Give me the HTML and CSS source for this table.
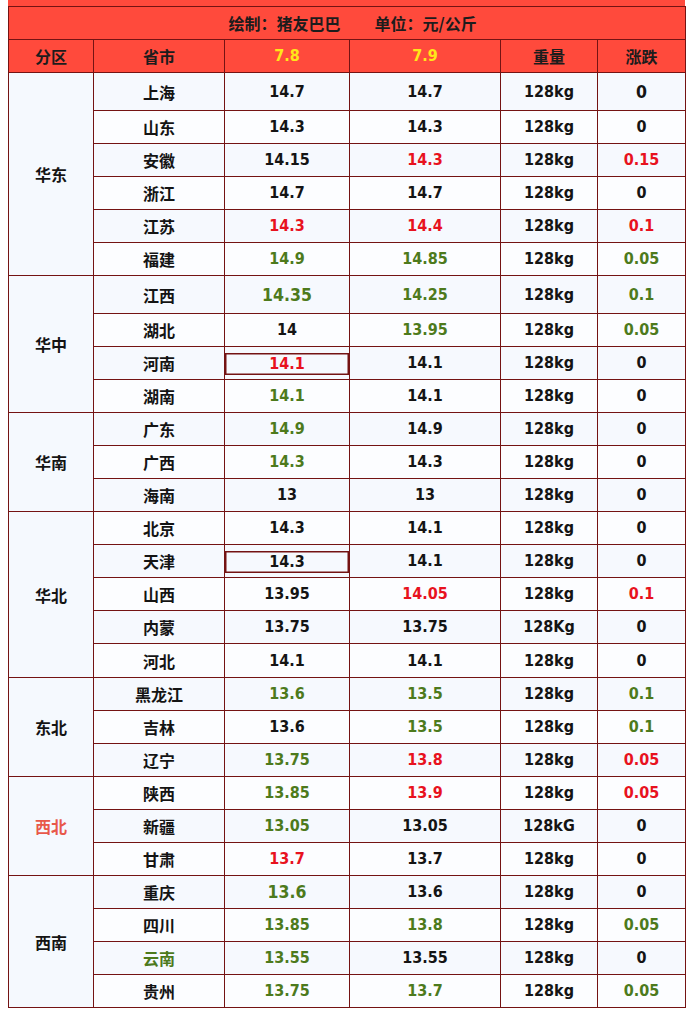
FILE: index.html
```html
<!DOCTYPE html>
<html lang="zh-CN">
<head>
<meta charset="utf-8">
<title>猪价表</title>
<link rel="stylesheet" href="styles.css">
</head>
<body>
<div class="sheet">
  <div class="strip"></div>
  <table class="price">
    <colgroup>
      <col class="c-zone"><col class="c-prov"><col class="c-d1"><col class="c-d2"><col class="c-wt"><col class="c-chg">
    </colgroup>
    <tr class="r-title">
      <td colspan="6" class="title"><span class="t1">绘制：猪友巴巴</span><span class="t2">单位：元/公斤</span></td>
    </tr>
    <tr class="r-head">
      <th class="cn">分区</th><th class="cn">省市</th><th class="num yellow">7.8</th><th class="num yellow">7.9</th><th class="cn">重量</th><th class="cn">涨跌</th>
    </tr>

    <tr class="r-tall odd">
      <td rowspan="6" class="zone">华东</td><td class="prov">上海</td><td class="num">14.7</td><td class="num">14.7</td><td class="num">128kg</td><td class="num big">0</td>
    </tr>
    <tr class="r even"><td class="prov">山东</td><td class="num">14.3</td><td class="num">14.3</td><td class="num">128kg</td><td class="num">0</td></tr>
    <tr class="r odd"><td class="prov">安徽</td><td class="num">14.15</td><td class="num red">14.3</td><td class="num">128kg</td><td class="num red">0.15</td></tr>
    <tr class="r even"><td class="prov">浙江</td><td class="num">14.7</td><td class="num">14.7</td><td class="num">128kg</td><td class="num">0</td></tr>
    <tr class="r odd"><td class="prov">江苏</td><td class="num red">14.3</td><td class="num red">14.4</td><td class="num">128kg</td><td class="num red">0.1</td></tr>
    <tr class="r even"><td class="prov">福建</td><td class="num green">14.9</td><td class="num green">14.85</td><td class="num">128kg</td><td class="num green">0.05</td></tr>

    <tr class="r-tall odd">
      <td rowspan="4" class="zone">华中</td><td class="prov">江西</td><td class="num green big">14.35</td><td class="num green">14.25</td><td class="num">128kg</td><td class="num green">0.1</td>
    </tr>
    <tr class="r even"><td class="prov">湖北</td><td class="num">14</td><td class="num green">13.95</td><td class="num">128kg</td><td class="num green">0.05</td></tr>
    <tr class="r odd"><td class="prov">河南</td><td class="num boxcell"><span class="boxed red">14.1</span></td><td class="num">14.1</td><td class="num">128kg</td><td class="num">0</td></tr>
    <tr class="r even"><td class="prov">湖南</td><td class="num green">14.1</td><td class="num">14.1</td><td class="num">128kg</td><td class="num">0</td></tr>

    <tr class="r odd">
      <td rowspan="3" class="zone">华南</td><td class="prov">广东</td><td class="num green">14.9</td><td class="num">14.9</td><td class="num">128kg</td><td class="num">0</td>
    </tr>
    <tr class="r even"><td class="prov">广西</td><td class="num green">14.3</td><td class="num">14.3</td><td class="num">128kg</td><td class="num">0</td></tr>
    <tr class="r odd"><td class="prov">海南</td><td class="num">13</td><td class="num">13</td><td class="num">128kg</td><td class="num">0</td></tr>

    <tr class="r even">
      <td rowspan="5" class="zone">华北</td><td class="prov">北京</td><td class="num">14.3</td><td class="num">14.1</td><td class="num">128kg</td><td class="num">0</td>
    </tr>
    <tr class="r odd"><td class="prov">天津</td><td class="num boxcell"><span class="boxed">14.3</span></td><td class="num">14.1</td><td class="num">128kg</td><td class="num">0</td></tr>
    <tr class="r even"><td class="prov">山西</td><td class="num">13.95</td><td class="num red">14.05</td><td class="num">128kg</td><td class="num red">0.1</td></tr>
    <tr class="r odd"><td class="prov">内蒙</td><td class="num">13.75</td><td class="num">13.75</td><td class="num">128Kg</td><td class="num">0</td></tr>
    <tr class="r-34 even"><td class="prov">河北</td><td class="num">14.1</td><td class="num">14.1</td><td class="num">128kg</td><td class="num">0</td></tr>

    <tr class="r odd">
      <td rowspan="3" class="zone">东北</td><td class="prov">黑龙江</td><td class="num green">13.6</td><td class="num green">13.5</td><td class="num">128kg</td><td class="num green">0.1</td>
    </tr>
    <tr class="r even"><td class="prov">吉林</td><td class="num">13.6</td><td class="num green">13.5</td><td class="num">128kg</td><td class="num green">0.1</td></tr>
    <tr class="r odd"><td class="prov">辽宁</td><td class="num green">13.75</td><td class="num red">13.8</td><td class="num">128kg</td><td class="num red">0.05</td></tr>

    <tr class="r even">
      <td rowspan="3" class="zone zone-red">西北</td><td class="prov">陕西</td><td class="num green">13.85</td><td class="num red">13.9</td><td class="num">128kg</td><td class="num red">0.05</td>
    </tr>
    <tr class="r odd"><td class="prov">新疆</td><td class="num green">13.05</td><td class="num">13.05</td><td class="num">128kG</td><td class="num">0</td></tr>
    <tr class="r even"><td class="prov">甘肃</td><td class="num red">13.7</td><td class="num">13.7</td><td class="num">128kg</td><td class="num">0</td></tr>

    <tr class="r odd">
      <td rowspan="4" class="zone">西南</td><td class="prov">重庆</td><td class="num green big">13.6</td><td class="num">13.6</td><td class="num">128kg</td><td class="num">0</td>
    </tr>
    <tr class="r even"><td class="prov">四川</td><td class="num green">13.85</td><td class="num green">13.8</td><td class="num">128kg</td><td class="num green">0.05</td></tr>
    <tr class="r odd"><td class="prov green">云南</td><td class="num green">13.55</td><td class="num">13.55</td><td class="num">128kg</td><td class="num">0</td></tr>
    <tr class="r even"><td class="prov">贵州</td><td class="num green">13.75</td><td class="num green">13.7</td><td class="num">128kg</td><td class="num green">0.05</td></tr>
  </table>
</div>
</body>
</html>
```

FILE: styles.css
```css
html, body {
  margin: 0;
  padding: 0;
  background: #ffffff;
}

.sheet {
  width: 677px;
  margin-left: 8px;
}

.strip {
  height: 6px;
  background: #ff4a3c;
}

.price {
  width: 677px;
  table-layout: fixed;
  border-collapse: collapse;
  border: 1px solid #741313;
  color: #141414;
}

.c-zone { width: 85px; }
.c-prov { width: 131px; }
.c-d1 { width: 125px; }
.c-d2 { width: 151px; }
.c-wt { width: 97px; }
.c-chg { width: 88px; }

.price td,
.price th {
  border: 1px solid #741313;
  padding: 0;
  text-align: center;
  vertical-align: middle;
  white-space: nowrap;
  line-height: 20px;
}

.r-title td,
.r-head th {
  background: #ff4a3c;
  height: 32px;
}

.title {
  font-family: "Noto Sans CJK SC", sans-serif;
  font-weight: 700;
  font-size: 16px;
  color: #1c1c1c;
  padding-left: 11px !important;
}

.title .t2 {
  margin-left: 34px;
}

.cn,
.prov,
.zone {
  font-family: "Noto Sans CJK SC", sans-serif;
  font-weight: 700;
  font-size: 16px;
}

.r-head th.cn {
  color: #1c1c1c;
}

.num {
  font-family: "DejaVu Sans Condensed", "DejaVu Sans", sans-serif;
  font-stretch: condensed;
  font-weight: 700;
  font-size: 16px;
}

.num.big {
  font-size: 17.5px;
}

.yellow {
  color: #ffe619;
}

.red {
  color: #e8121e;
}

.green {
  color: #4d7a1c;
}

.zone {
  background: #f5f9fe;
  color: #141414;
}

.zone-red {
  color: #e8584a;
}

.r td { height: 32px; }
.r-tall td { height: 37px; }
.r-34 td { height: 33px; }

.odd td { background: #f6f9fe; }
.even td { background: #fcfdff; }
.odd td.zone,
.even td.zone { background: #f5f9fe; }

.r td.boxcell {
  vertical-align: top;
  height: 32px;
}

.boxed {
  display: block;
  box-sizing: border-box;
  height: 22px;
  margin-top: 6px;
  line-height: 20px;
  border: 1px solid #741313;
  box-shadow: inset 0 0 0 0.5px #741313;
}
```
